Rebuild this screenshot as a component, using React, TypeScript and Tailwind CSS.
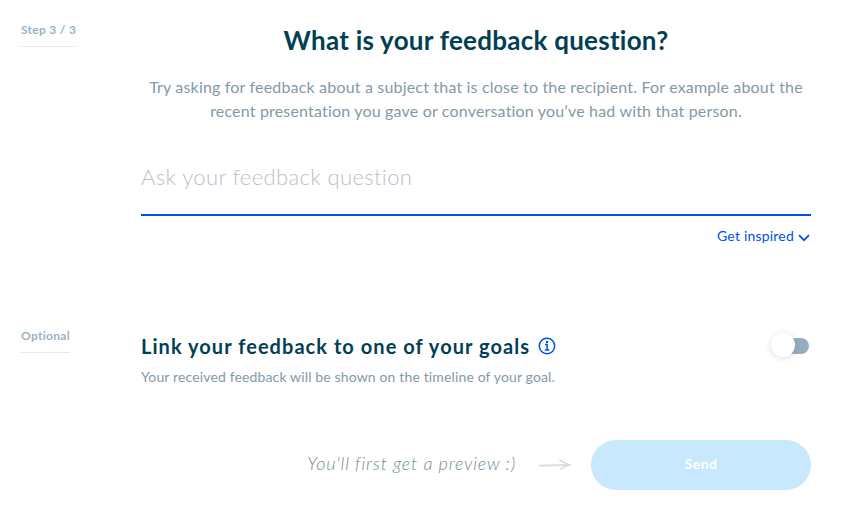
import type { ReactNode } from 'react'

function SideLabel({ children }: { children: ReactNode }) {
  return (
    <div className="w-[120px] shrink-0">
      <span className="block w-fit whitespace-nowrap border-b border-[#e6e8ea] pb-2 text-[12px] font-bold leading-4 tracking-[0.3px] text-[#9ab3c3]">
        {children}
      </span>
    </div>
  )
}

function ChevronIcon() {
  return (
    <svg width="12" height="8" viewBox="0 0 12 8" fill="none" className="mt-[3px]">
      <path d="M1 1.200 6 6.200l5-5" stroke="#0050f0" strokeWidth="1.7" />
    </svg>
  )
}

function InfoIcon() {
  return (
    <svg width="18" height="18" viewBox="0 0 18 18" fill="none">
      <circle cx="9" cy="9" r="7.700" stroke="#0050f0" strokeWidth="1.500" />
      <circle cx="9" cy="4.900" r="1.200" fill="#0050f0" />
      <path d="M7 7.500h2.100v5.500M6.800 13.100h4.600" stroke="#0050f0" strokeWidth="1.500" />
    </svg>
  )
}

function ArrowIcon() {
  return (
    <svg width="34" height="12" viewBox="0 0 34 12" fill="none" strokeLinecap="round">
      <path d="M1.500 6.700 31 5.800" stroke="#dedede" strokeWidth="2" />
      <path d="M22 1.200c3 1.900 6 3.500 9.500 4.600-3 .8-6 2.200-8.500 4.200" stroke="#d8d8d8" strokeWidth="1.400" />
    </svg>
  )
}

export default function App() {
  return (
    <main className="h-[508px] w-[861px] overflow-hidden bg-white pl-[21px] font-['Lato',sans-serif]">
      <section className="flex h-[328px] pt-[22px]">
        <SideLabel>Step 3 / 3</SideLabel>
        <div className="w-[670px]">
          <h1 className="whitespace-nowrap text-center text-[26px] font-bold leading-9 tracking-[0.25px] text-[#003f54]">
            What is your feedback question?
          </h1>
          <p className="mt-[17px] whitespace-nowrap text-center text-[16px] leading-6 tracking-[0.18px] text-[#8499a6]">
            Try asking for feedback about a subject that is close to the recipient. For example about the
            <br />
            recent presentation you gave or conversation you’ve had with that person.
          </p>
          <div className="mt-[30px] flex h-[63px] items-start border-b-2 border-[#0050f0] pt-2 text-[22px] font-light leading-8 tracking-[0.37px] text-[#b8c1c9]">
            Ask your feedback question
          </div>
          <div className="mt-[10px] flex items-center justify-end gap-1 pr-px text-[14px] leading-5 tracking-[0.2px] text-[#0050f0]">
            Get inspired
            <ChevronIcon />
          </div>
        </div>
      </section>
      <section className="flex h-[112px]">
        <SideLabel>Optional</SideLabel>
        <div className="flex w-[670px] items-start justify-between">
          <div>
            <h2 className="flex items-center gap-2 whitespace-nowrap pt-1 text-[20px] font-bold leading-7 tracking-[1.05px] text-[#003f54]">
              Link your feedback to one of your goals
              <InfoIcon />
            </h2>
            <p className="mt-[7px] whitespace-nowrap text-[14px] leading-5 tracking-[0.14px] text-[#8499a6]">
              Your received feedback will be shown on the timeline of your goal.
            </p>
          </div>
          <div className="mr-[2px] mt-[10px] flex h-4 w-8 items-center rounded-full bg-[#95aebf]">
            <span className="-ml-[6px] -mt-[2px] size-6 shrink-0 rounded-full bg-white shadow-[0_1px_6px_rgba(0,0,0,0.14)]" />
          </div>
        </div>
      </section>
      <footer className="flex h-[50px] w-[790px] items-center justify-end">
        <span className="whitespace-nowrap pb-[3px] text-[18px] font-light italic tracking-[0.82px] text-[#718c9b]">
          You'll first get a preview :)
        </span>
        <span className="ml-[22px] mr-[19px]">
          <ArrowIcon />
        </span>
        <button className="h-[50px] w-[220px] rounded-full bg-[#c8e8fe] pb-[3px] text-[14px] font-bold tracking-[0.5px] text-white">
          Send
        </button>
      </footer>
    </main>
  )
}
